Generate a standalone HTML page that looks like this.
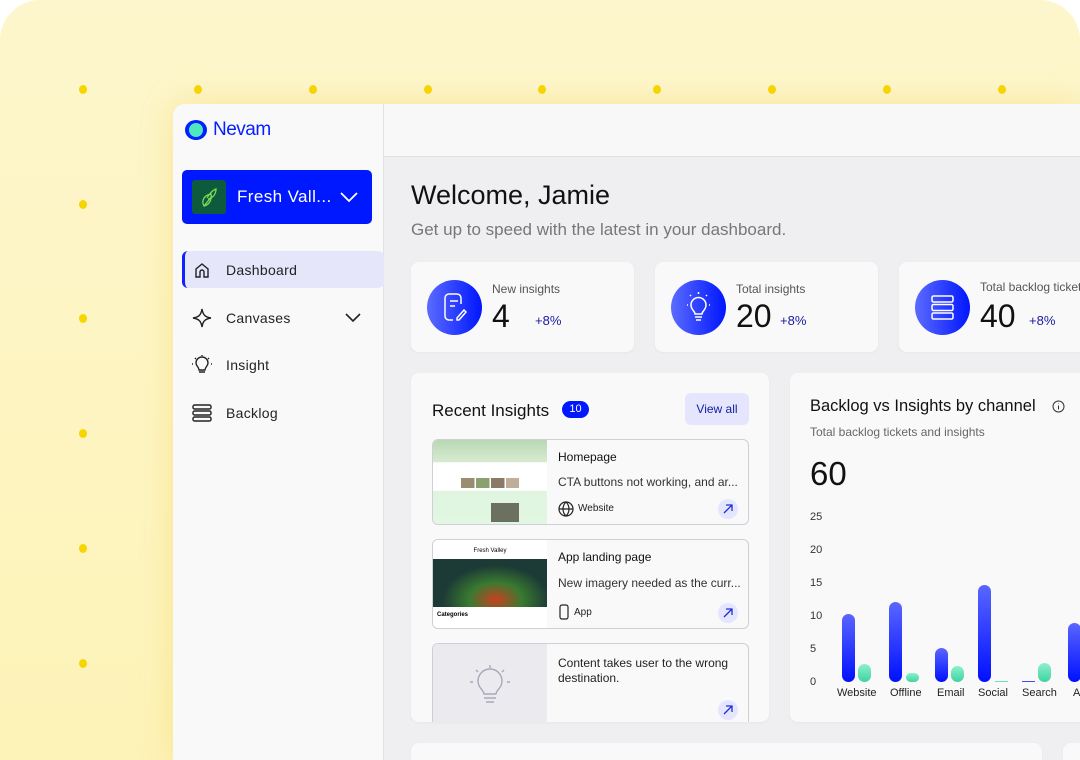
<!DOCTYPE html>
<html><head><meta charset="utf-8"><style>
*{box-sizing:border-box;margin:0;padding:0}
html,body{width:1080px;height:760px;overflow:hidden}
body{background:#fff;font-family:"Liberation Sans",sans-serif;position:relative}
.bg{position:absolute;left:0;top:0;width:1080px;height:760px;background:linear-gradient(180deg,#fdf6cc 0%,#fdf3b8 100%);border-radius:40px 40px 0 0}
.dot{position:absolute;width:8px;height:9px;border-radius:50%;background:#f7d500}
.win{position:absolute;left:173px;top:104px;width:907px;height:656px;background:#efeff1;border-radius:12px 0 0 0;overflow:hidden;box-shadow:0 0 30px rgba(240,200,60,.35)}
.side{position:absolute;left:0;top:0;width:211px;height:100%;background:#f9f9f9;border-right:1px solid #e2e2e6}
.top{position:absolute;left:211px;top:0;right:0;height:53px;background:#f8f8f8;border-bottom:1px solid #e0e0e4}
.card{position:absolute;background:#f9f9f9;border-radius:8px;box-shadow:0 1px 3px rgba(0,0,0,.04);overflow:hidden}
.nav{position:absolute;left:9px;width:202px;height:37px;display:flex;align-items:center;font-size:14px;color:#222;letter-spacing:.3px}
.nav svg{position:absolute;left:10px}
.nav span{position:absolute;left:44px}
.circ{position:absolute;width:55px;height:55px;border-radius:50%;background:linear-gradient(90deg,#5b6bff,#0016ff);left:16px;top:18px}
.lbl{position:absolute;left:81px;top:20px;font-size:12px;color:#555}
.num{position:absolute;left:81px;top:36px;font-size:32px;color:#111}
.pct{position:absolute;font-size:13px;color:#1a1aa0;top:51px}
.item{position:absolute;left:21px;width:317px;background:#f9f9f9;border:1px solid #cfcfd8;border-radius:6px;overflow:hidden}
.thumb{position:absolute;left:0;top:0;width:114px;height:100%}
.it{position:absolute;left:125px;font-size:12px;color:#222}
.arr{position:absolute;right:10px;width:20px;height:20px;border-radius:50%;background:#e4e6ff}
.yl{position:absolute;left:20px;font-size:11px;color:#333}
.bar{position:absolute;border-radius:7px}
.b{background:linear-gradient(180deg,#5a66ff,#0010ff)}
.g{background:linear-gradient(180deg,#8ef0cc,#3fd3a0)}
.xl{position:absolute;top:314px;font-size:11px;color:#222}
</style></head><body>
<div class="bg"></div>
<div class="dot" style="left:79px;top:85px"></div><div class="dot" style="left:194px;top:85px"></div><div class="dot" style="left:309px;top:85px"></div><div class="dot" style="left:424px;top:85px"></div><div class="dot" style="left:538px;top:85px"></div><div class="dot" style="left:653px;top:85px"></div><div class="dot" style="left:768px;top:85px"></div><div class="dot" style="left:883px;top:85px"></div><div class="dot" style="left:998px;top:85px"></div>
<div class="dot" style="left:79px;top:200px"></div><div class="dot" style="left:79px;top:314px"></div><div class="dot" style="left:79px;top:429px"></div><div class="dot" style="left:79px;top:544px"></div><div class="dot" style="left:79px;top:659px"></div>

<div class="win">
<div class="side">
 <div style="position:absolute;left:12px;top:16px;width:22px;height:20px;border-radius:50%;background:#0020ff"></div>
 <div style="position:absolute;left:16px;top:19px;width:14px;height:14px;border-radius:50%;background:#4ee8c0"></div>
 <div style="position:absolute;left:40px;top:15px;font-size:19px;color:#0820ff;letter-spacing:-.5px">Nevam</div>
 <div style="position:absolute;left:9px;top:66px;width:190px;height:54px;background:#0018ff;border-radius:5px">
  <div style="position:absolute;left:10px;top:10px;width:34px;height:34px;background:#0d5a3c;border-radius:3px">
   <svg width="34" height="34" viewBox="0 0 34 34" fill="none" stroke="#7ed957" stroke-width="1.3"><path d="M12 26c-3-5 0-11 7-12 1 6-2 11-7 12zM15 18c2-4 6-8 9-9 0 5-3 9-8 10M12 26l8-10"/></svg>
  </div>
  <div style="position:absolute;left:55px;top:17px;color:#fff;font-size:17px;letter-spacing:.4px">Fresh Vall...</div>
  <svg style="position:absolute;left:157px;top:20px" width="20" height="14" viewBox="0 0 20 14" fill="none" stroke="#fff" stroke-width="1.8"><path d="M2 3l8 8 8-8"/></svg>
 </div>
 <div class="nav" style="top:147px;background:#e5e6fa;border-left:3px solid #1020ff;border-radius:6px">
  <svg width="18" height="18" viewBox="0 0 18 18" fill="none" stroke="#222" stroke-width="1.4" style="left:8px"><path d="M3 16V8l6-5 6 5v8h-4v-5a2 2 0 0 0-4 0v5z"/></svg><span style="left:41px">Dashboard</span></div>
 <div class="nav" style="top:195px"><svg width="20" height="20" viewBox="0 0 20 20" fill="none" stroke="#222" stroke-width="1.4"><path d="M10 1c1 6 3 8 9 9-6 1-8 3-9 9-1-6-3-8-9-9 6-1 8-3 9-9z"/></svg><span>Canvases</span>
  <svg width="16" height="10" viewBox="0 0 16 10" fill="none" stroke="#222" stroke-width="1.6" style="left:163px"><path d="M1 1l7 7 7-7"/></svg></div>
 <div class="nav" style="top:242px"><svg width="20" height="20" viewBox="0 0 20 20" fill="none" stroke="#222" stroke-width="1.4"><path d="M7 15c0-3-3-4-3-7a6 6 0 0 1 12 0c0 3-3 4-3 7zM7 17h6M10 0v1M3 3l1 1M17 3l-1 1M0 9h1M19 9h1"/></svg><span>Insight</span></div>
 <div class="nav" style="top:290px"><svg width="20" height="20" viewBox="0 0 20 20" fill="none" stroke="#222" stroke-width="1.4"><rect x="1" y="2" width="18" height="4" rx="1.5"/><rect x="1" y="8" width="18" height="4" rx="1.5"/><rect x="1" y="14" width="18" height="4" rx="1.5"/></svg><span>Backlog</span></div>
</div>
<div class="top"></div>

<div style="position:absolute;left:238px;top:76px;font-size:27px;color:#111">Welcome, Jamie</div>
<div style="position:absolute;left:238px;top:116px;font-size:17px;color:#777">Get up to speed with the latest in your dashboard.</div>

<div class="card" style="left:238px;top:158px;width:223px;height:90px"><div class="circ"><svg width="55" height="55" viewBox="0 0 55 55" fill="none" stroke="#fff" stroke-width="1.5"><path d="M34 24v-6a4 4 0 0 0-4-4h-8a4 4 0 0 0-4 4v18a4 4 0 0 0 4 4h4M23 21h8M23 26h5M30 38l7-8 2 2-7 8h-2z"/></svg></div><div class="lbl">New insights</div><div class="num">4</div><div class="pct" style="left:124px">+8%</div></div>
<div class="card" style="left:482px;top:158px;width:223px;height:90px"><div class="circ"><svg width="55" height="55" viewBox="0 0 55 55" fill="none" stroke="#fff" stroke-width="1.5"><path d="M24 34c0-3-4-4-4-9a7.5 7.5 0 0 1 15 0c0 5-4 6-4 9zM24 37h7M25 40h5M27.5 12v2M19 15l1 1M36 15l-1 1M16 25h1M38 25h1"/></svg></div><div class="lbl">Total insights</div><div class="num">20</div><div class="pct" style="left:125px">+8%</div></div>
<div class="card" style="left:726px;top:158px;width:181px;height:90px;border-radius:8px 0 0 8px"><div class="circ"><svg width="55" height="55" viewBox="0 0 55 55" fill="none" stroke="#fff" stroke-width="1.5"><rect x="17" y="16" width="21" height="6" rx="1.5"/><rect x="17" y="24.5" width="21" height="6" rx="1.5"/><rect x="17" y="33" width="21" height="6" rx="1.5"/></svg></div><div class="lbl" style="top:18px;white-space:nowrap">Total backlog tickets</div><div class="num">40</div><div class="pct" style="left:130px">+8%</div></div>

<div class="card" style="left:238px;top:269px;width:358px;height:349px">
 <div style="position:absolute;left:21px;top:28px;font-size:17px;color:#111">Recent Insights</div>
 <div style="position:absolute;left:151px;top:28px;width:27px;height:17px;border-radius:9px;background:#0018ff;color:#fff;font-size:11px;text-align:center;line-height:17px">10</div>
 <div style="position:absolute;left:274px;top:20px;width:64px;height:32px;border-radius:6px;background:#e5e6fd;color:#1020a0;font-size:12px;text-align:center;line-height:32px">View all</div>
 <div class="item" style="top:66px;height:86px">
  <div class="thumb" style="background:linear-gradient(180deg,#b9d8b4 0,#d6ead0 26%,#fff 27%,#fff 60%,#dff5df 61%,#e2f7e2 100%)">
   <div style="position:absolute;left:28px;top:38px;width:58px;height:10px;background:linear-gradient(90deg,#9a8c70 0 23%,#fff 23% 26%,#8aa070 26% 49%,#fff 49% 52%,#8a7a66 52% 75%,#fff 75% 78%,#bfae99 78%)"></div>
   <div style="position:absolute;left:58px;top:63px;width:28px;height:19px;background:#6c7060"></div>
  </div>
  <div class="it" style="top:10px;color:#111">Homepage</div>
  <div class="it" style="top:35px;color:#333">CTA buttons not working, and ar...</div>
  <svg style="position:absolute;left:125px;top:61px" width="16" height="16" viewBox="0 0 16 16" fill="none" stroke="#222" stroke-width="1.2"><circle cx="8" cy="8" r="7"/><path d="M1 8h14M8 1c-4 4-4 10 0 14M8 1c4 4 4 10 0 14"/></svg>
  <div class="it" style="left:145px;top:63px;font-size:10px;color:#222">Website</div>
  <div class="arr" style="top:59px"><svg width="20" height="20" viewBox="0 0 20 20" fill="none" stroke="#2030d0" stroke-width="1.3"><path d="M6 14l8-8M8 6h6v6"/></svg></div>
 </div>
 <div class="item" style="top:166px;height:90px">
  <div class="thumb" style="background:#fff">
   <div style="position:absolute;left:0;width:114px;text-align:center;top:8px;font-size:6px">Fresh Valley</div>
   <div style="position:absolute;left:0;top:19px;width:114px;height:48px;background:radial-gradient(ellipse at 55% 85%,#c84020 0,#3a7a30 30%,#1c3a36 60%)"></div>
   <div style="position:absolute;left:4px;top:72px;font-size:6px;font-weight:bold">Categories</div>
  </div>
  <div class="it" style="top:10px;color:#111">App landing page</div>
  <div class="it" style="top:36px;color:#333">New imagery needed as the curr...</div>
  <svg style="position:absolute;left:125px;top:64px" width="12" height="16" viewBox="0 0 12 16" fill="none" stroke="#222" stroke-width="1.2"><rect x="2" y="1" width="8" height="14" rx="2"/></svg>
  <div class="it" style="left:141px;top:67px;font-size:10px">App</div>
  <div class="arr" style="top:63px"><svg width="20" height="20" viewBox="0 0 20 20" fill="none" stroke="#2030d0" stroke-width="1.3"><path d="M6 14l8-8M8 6h6v6"/></svg></div>
 </div>
 <div class="item" style="top:270px;height:79px;border-bottom:none;border-radius:6px 6px 0 0">
  <div class="thumb" style="background:#ebebef"><svg style="position:absolute;left:35px;top:20px" width="44" height="44" viewBox="0 0 44 44" fill="none" stroke="#a8a8b8" stroke-width="1.4"><path d="M16 30c0-4-6-6-6-13a12 12 0 0 1 24 0c0 7-6 9-6 13zM16 34h12M18 38h8M22 1v3M8 6l2 2M36 6l-2 2M2 18h3M39 18h3"/></svg></div>
  <div class="it" style="top:12px;line-height:15px;width:185px">Content takes user to the wrong destination.</div>
  <div class="arr" style="top:56px"><svg width="20" height="20" viewBox="0 0 20 20" fill="none" stroke="#2030d0" stroke-width="1.3"><path d="M6 14l8-8M8 6h6v6"/></svg></div>
 </div>
</div>

<div class="card" style="left:617px;top:269px;width:290px;height:349px;border-radius:8px 0 0 8px">
 <div style="position:absolute;left:20px;top:24px;font-size:16.5px;color:#111;white-space:nowrap">Backlog vs Insights by channel</div>
 <svg style="position:absolute;left:262px;top:27px" width="13" height="13" viewBox="0 0 13 13" fill="none" stroke="#333" stroke-width="1"><circle cx="6.5" cy="6.5" r="5.5"/><path d="M6.5 5.5v4M6.5 3.5v.5"/></svg>
 <div style="position:absolute;left:20px;top:52px;font-size:12px;color:#666">Total backlog tickets and insights</div>
 <div style="position:absolute;left:20px;top:82px;font-size:33px;color:#111">60</div>
 <div class="yl" style="top:138px">25</div><div class="yl" style="top:171px">20</div><div class="yl" style="top:204px">15</div><div class="yl" style="top:237px">10</div><div class="yl" style="top:270px">5</div><div class="yl" style="top:303px">0</div>
 <div class="bar b" style="left:52px;top:241px;width:13px;height:68px"></div><div class="bar g" style="left:68px;top:291px;width:13px;height:18px"></div>
 <div class="bar b" style="left:99px;top:229px;width:13px;height:80px"></div><div class="bar g" style="left:116px;top:300px;width:13px;height:9px"></div>
 <div class="bar b" style="left:145px;top:275px;width:13px;height:34px"></div><div class="bar g" style="left:161px;top:293px;width:13px;height:16px"></div>
 <div class="bar b" style="left:188px;top:212px;width:13px;height:97px"></div><div style="position:absolute;left:205px;top:308px;width:13px;height:1px;background:#6ee0b8"></div>
 <div style="position:absolute;left:232px;top:308px;width:13px;height:1px;background:#4050f0"></div><div class="bar g" style="left:248px;top:290px;width:13px;height:19px"></div>
 <div class="bar b" style="left:278px;top:250px;width:13px;height:59px"></div>
 <div class="xl" style="left:47px">Website</div><div class="xl" style="left:100px">Offline</div><div class="xl" style="left:147px">Email</div><div class="xl" style="left:188px">Social</div><div class="xl" style="left:232px">Search</div><div class="xl" style="left:283px">A</div>
</div>

<div class="card" style="left:238px;top:639px;width:631px;height:17px;border-radius:8px 8px 0 0"></div>
<div class="card" style="left:890px;top:639px;width:17px;height:17px;border-radius:8px 0 0 0"></div>
</div>
</body></html>
